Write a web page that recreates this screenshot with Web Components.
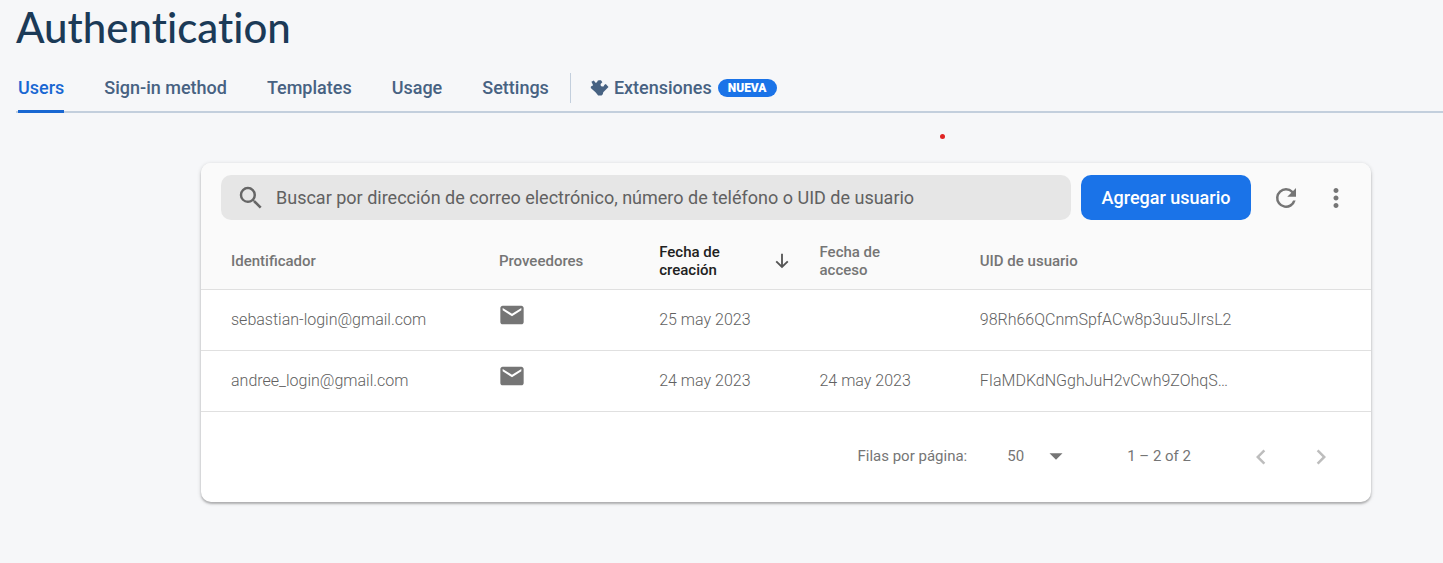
<!DOCTYPE html>
<html lang="es">
<head>
<meta charset="utf-8">
<title>Authentication</title>
<style>
  body { margin: 0; background: #f6f7f9; font-family: Roboto, sans-serif; color: #757575; }
</style>
</head>
<body>
<auth-page></auth-page>

<script>
const define = (name, html, setup) => {
  const template = document.createElement('template');
  template.innerHTML = html;
  customElements.define(name, class extends HTMLElement {
    constructor() {
      super();
      this.attachShadow({ mode: 'open' }).append(template.content.cloneNode(true));
    }
    connectedCallback() { if (setup) setup(this, this.shadowRoot); }
  });
};

/* Material glyphs, all on a 24-unit grid */
const ICONS = {
  search: 'M15.5 14h-.79l-.28-.27A6.47 6.47 0 0 0 16 9.5 6.5 6.5 0 1 0 9.5 16c1.61 0 3.09-.59 4.23-1.57l.27.28v.79l5 4.99L20.49 19l-4.99-5zm-6 0C7.01 14 5 11.99 5 9.5S7.01 5 9.5 5 14 7.01 14 9.5 11.99 14 9.5 14z',
  refresh: 'M17.65 6.35A7.96 7.96 0 0 0 12 4a8 8 0 1 0 7.73 10h-2.08A6 6 0 1 1 12 6c1.66 0 3.14.69 4.22 1.78L13 11h7V4l-2.35 2.35z',
  more: 'M12 8c1.1 0 2-.9 2-2s-.9-2-2-2-2 .9-2 2 .9 2 2 2zm0 2c-1.1 0-2 .9-2 2s.9 2 2 2 2-.9 2-2-.9-2-2-2zm0 6c-1.1 0-2 .9-2 2s.9 2 2 2 2-.9 2-2-.9-2-2-2z',
  mail: 'M20 4H4c-1.1 0-1.99.9-1.99 2L2 18c0 1.1.9 2 2 2h16c1.1 0 2-.9 2-2V6c0-1.1-.9-2-2-2zm0 4l-8 5-8-5V6l8 5 8-5v2z',
  prev: 'M15.41 7.41L14 6l-6 6 6 6 1.41-1.41L10.83 12z',
  next: 'M10 6L8.59 7.41 13.17 12l-4.58 4.59L10 18l6-6z',
  drop: 'M6 9.500l6 6 6-6z',
  down: 'M11 4h2v12.2l4.6-4.6L19 13l-7 7-7-7 1.4-1.4 4.6 4.6z',
  extension: 'M1.200 3.500 L4.400 2 L6.700 5 Q8.200 5.200 8.900 4.100 Q9 1.500 11 1.500 L14 1.500 L15.800 4.200 Q13 6 13.300 8 Q14 10.500 17.300 9.900 Q18.500 7 20.400 6.800 L24 10.800 L17 17.500 Q17 20.500 14.700 22 L10.200 22 L7 18 L0.400 12.100 Q0 9.500 1.500 9.200 Q3.600 9 3.200 7.500 Z'
};
define('app-icon', `
  <style>
    :host { display: inline-block; width: 25px; height: 25px; flex: none; }
    svg { display: block; width: 100%; height: 100%; fill: currentColor; }
  </style>
  <svg viewBox="0 0 24 24" aria-hidden="true"><path></path></svg>
`, (el, root) => root.querySelector('path').setAttribute('d', ICONS[el.getAttribute('name')]));

define('icon-button', `
  <style>
    :host { display: block; flex: none; color: #757575; }
    button { display: flex; align-items: center; justify-content: center; width: 50px; height: 50px; padding: 0; border: 0; border-radius: 50%; background: none; color: inherit; cursor: pointer; }
    app-icon { width: 30px; height: 30px; }
    :host([disabled]) { color: #bdbdbd; }
  </style>
  <button type="button"></button>
`, (el, root) => {
  const button = root.querySelector('button');
  button.setAttribute('aria-label', el.getAttribute('label'));
  button.disabled = el.hasAttribute('disabled');
  const icon = document.createElement('app-icon');
  icon.setAttribute('name', el.getAttribute('icon'));
  button.replaceChildren(icon);
});

define('tab-link', `
  <style>
    :host { display: block; }
    a { display: flex; align-items: center; height: 50px; box-sizing: border-box; padding-top: 2px; border-bottom: 3px solid transparent; color: #476282; font-size: 18px; font-weight: 500; line-height: 24px; text-decoration: none; white-space: nowrap; }
    :host([active]) a { color: #1967d2; border-bottom-color: #1967d2; border-radius: 2px 2px 0 0; }
  </style>
  <a href="#"><slot></slot></a>
`, (el, root) => { if (el.hasAttribute('active')) root.querySelector('a').setAttribute('aria-current', 'page'); });

define('new-badge', `
  <style>
    :host { display: block; margin-left: 6px; padding: 0 10px; border-radius: 9px; background: #1a73e8; color: #fff; font-size: 12px; font-weight: 900; line-height: 18px; }
  </style>
  <slot></slot>
`);

define('page-header', `
  <style>
    :host { display: block; padding: 0 0 0 16px; }
    h1 { margin: 0; height: 63px; color: #1b3a57; font: 500 42px/54px Lato, sans-serif; font-variant-ligatures: none; }
    nav { display: flex; gap: 40px; height: 50px; box-shadow: inset 0 -2px #c3cfdd; padding-left: 2px; }
    .ext { display: flex; margin-left: -19px; }
    .ext::before { content: ""; width: 1px; height: 30px; margin: 10px 19px 0 0; background: #c3cfdd; }
    app-icon { width: 19px; height: 18px; margin-right: 5px; }
  </style>
  <h1>Authentication</h1>
  <nav>
    <tab-link active>Users</tab-link>
    <tab-link>Sign-in method</tab-link>
    <tab-link>Templates</tab-link>
    <tab-link>Usage</tab-link>
    <tab-link>Settings</tab-link>
    <div class="ext"><tab-link><app-icon name="extension"></app-icon>Extensiones<new-badge>NUEVA</new-badge></tab-link></div>
  </nav>
`);

define('search-toolbar', `
  <style>
    :host { display: flex; align-items: center; height: 69px; padding: 0 10px 0 20px; }
    label { display: flex; flex: 1; align-items: center; height: 45px; padding: 0 15px; border-radius: 10px; background: #e6e6e6; color: #666; }
    label app-icon { width: 30px; height: 30px; margin-right: 10px; }
    input { flex: 1; min-width: 0; padding: 0; border: 0; outline: 0; background: none; color: #333; font: 400 18px/24px Roboto, sans-serif; }
    input::placeholder { color: #616161; opacity: 1; }
    .add { min-width: 170px; height: 45px; margin: 0 10px; padding: 0 20px; border: 0; border-radius: 10px; background: #1a73e8; color: #fff; font: 500 18px/24px Roboto, sans-serif; cursor: pointer; white-space: nowrap; }
  </style>
  <label><app-icon name="search"></app-icon><input type="text" aria-label="Buscar usuarios" placeholder="Buscar por dirección de correo electrónico, número de teléfono o UID de usuario"></label>
  <button class="add" type="button">Agregar usuario</button>
  <icon-button icon="refresh" label="Actualizar"></icon-button>
  <icon-button icon="more" label="Más opciones"></icon-button>
`);

define('users-table', `
  <style>
    :host { display: block; }
    table { width: 100%; table-layout: fixed; border-collapse: collapse; }
    .id { width: 22.9%; }
    .narrow { width: 13.7%; }
    th, td { box-sizing: border-box; padding: 0 0 0 30px; border-bottom: 1px solid #e0e0e0; text-align: left; }
    th { height: 57px; padding-top: 2px; font-size: 15px; font-weight: 500; line-height: 18px; }
    td { height: 61px; font-size: 16px; font-weight: 300; line-height: 20px; color: #616161; white-space: nowrap; }
    td app-icon { display: block; width: 28px; height: 28px; margin: 0 0 10px -1px; color: #757575; }
    .sort { display: flex; align-items: center; gap: 40px; color: #212121; }
    .sort span { flex: 0 0 72px; }
    .sort app-icon { width: 22px; height: 22px; color: #555; }
    .wrap { display: block; width: 80px; }
    .uid { max-width: 260px; overflow: hidden; text-overflow: ellipsis; }
  </style>
  <table>
    <colgroup><col class="id"><col class="narrow"><col class="narrow"><col class="narrow"><col></colgroup>
    <thead><tr>
      <th>Identificador</th><th>Proveedores</th>
      <th aria-sort="descending"><div class="sort"><span>Fecha de creación</span><app-icon name="down"></app-icon></div></th>
      <th><span class="wrap">Fecha de acceso</span></th><th>UID de usuario</th>
    </tr></thead>
    <tbody>
      <tr><td>sebastian-login@gmail.com</td><td><app-icon name="mail"></app-icon></td><td>25 may 2023</td><td></td><td><div class="uid">98Rh66QCnmSpfACw8p3uu5JIrsL2</div></td></tr>
      <tr><td>andree_login@gmail.com</td><td><app-icon name="mail"></app-icon></td><td>24 may 2023</td><td>24 may 2023</td><td><div class="uid">FIaMDKdNGghJuH2vCwh9ZOhqS…</div></td></tr>
    </tbody>
  </table>
`);

define('table-pager', `
  <style>
    :host { display: flex; align-items: center; justify-content: flex-end; height: 90px; padding-right: 25px; font-size: 15px; line-height: 20px; }
    label { margin-right: 40px; }
    label, .pick, .range { padding-bottom: 2px; }
    .pick { display: grid; width: 62px; align-items: center; margin-right: 58px; }
    select, .pick app-icon { grid-area: 1 / 1; }
    select { appearance: none; width: 100%; padding: 0; border: 0; background: none; color: inherit; font: 400 15px/20px Roboto, sans-serif; }
    .pick app-icon { justify-self: end; width: 26px; height: 26px; pointer-events: none; }
    .range { margin-right: 45px; }
    .range + icon-button { margin-right: 10px; }
  </style>
  <label for="rows">Filas por página:</label>
  <span class="pick"><select id="rows"><option>50</option><option>100</option></select><app-icon name="drop"></app-icon></span>
  <span class="range">1 – 2 of 2</span>
  <icon-button icon="prev" label="Página anterior" disabled></icon-button>
  <icon-button icon="next" label="Página siguiente" disabled></icon-button>
`);

define('users-card', `
  <style>
    :host { display: block; margin: 50px 72px 60px 201px; border-radius: 10px; background: #fff; overflow: hidden; box-shadow: 0 2px 2px rgba(0,0,0,.2), 0 1px 4px rgba(0,0,0,.18); }
    .head { background: linear-gradient(#fafafa 126px, #fff 126px); }
  </style>
  <div class="head">
    <search-toolbar></search-toolbar>
    <users-table></users-table>
  </div>
  <table-pager></table-pager>
`);

define('auth-page', `
  <style>
    :host { display: block; position: relative; }
    .dot { position: absolute; top: 134px; left: 940px; width: 5px; height: 5px; border-radius: 50%; background: #e02424; }
  </style>
  <page-header></page-header>
  <main><users-card></users-card></main>
  <span class="dot"></span>
`);
</script>
</body>
</html>
